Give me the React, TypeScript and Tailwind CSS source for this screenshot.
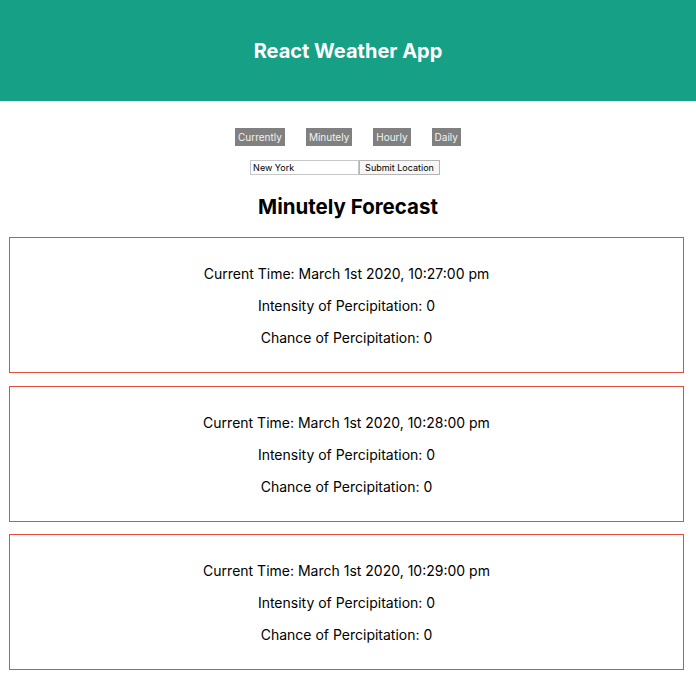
import React from "react";

interface MinuteData {
  time: string;
  intensity: number;
  chance: number;
}

const minutes: MinuteData[] = [
  { time: "March 1st 2020, 10:27:00 pm", intensity: 0, chance: 0 },
  { time: "March 1st 2020, 10:28:00 pm", intensity: 0, chance: 0 },
  { time: "March 1st 2020, 10:29:00 pm", intensity: 0, chance: 0 },
];

const tabs = ["Currently", "Minutely", "Hourly", "Daily"];

const App: React.FC = () => {
  return (
    <div className="min-h-[678px] bg-white text-black font-['Inter',sans-serif]">
      <header className="h-[101px] bg-[#16a085] flex items-center justify-center">
        <h1 className="text-[20px] font-bold text-white">React Weather App</h1>
      </header>

      <div className="flex justify-center gap-[21px] mt-[27px]">
        {tabs.map((t) => (
          <button
            key={t}
            className="h-[18px] px-[3px] bg-[#808080] text-[#f2f2f2] text-[10px] leading-none"
          >
            {t}
          </button>
        ))}
      </div>

      <div className="flex justify-center mt-[14px] pr-[6px]">
        <input
          defaultValue="New York"
          className="w-[109px] h-[15px] border border-[#c8c8c8] px-[2px] text-[9px] outline-none"
        />
        <button className="h-[15px] px-[5px] border border-[#b4b4b4] bg-[#f6f6f6] text-[9px] leading-none">
          Submit Location
        </button>
      </div>

      <h2 className="text-center text-[20.5px] font-bold mt-[20px] leading-[24px]">Minutely Forecast</h2>

      <div className="flex flex-col gap-[12.5px] ml-[9px] w-[675px] mt-[18px]">
        {minutes.map((m) => (
          <div
            key={m.time}
            className="border border-[#e74c3c] pt-[20px] pb-[18px] text-center text-[14px]"
          >
            <p className="h-[32px] leading-[32px]">Current Time: {m.time}</p>
            <p className="h-[32px] leading-[32px]">Intensity of Percipitation: {m.intensity}</p>
            <p className="h-[32px] leading-[32px]">Chance of Percipitation: {m.chance}</p>
          </div>
        ))}
      </div>
    </div>
  );
};

export default App;
